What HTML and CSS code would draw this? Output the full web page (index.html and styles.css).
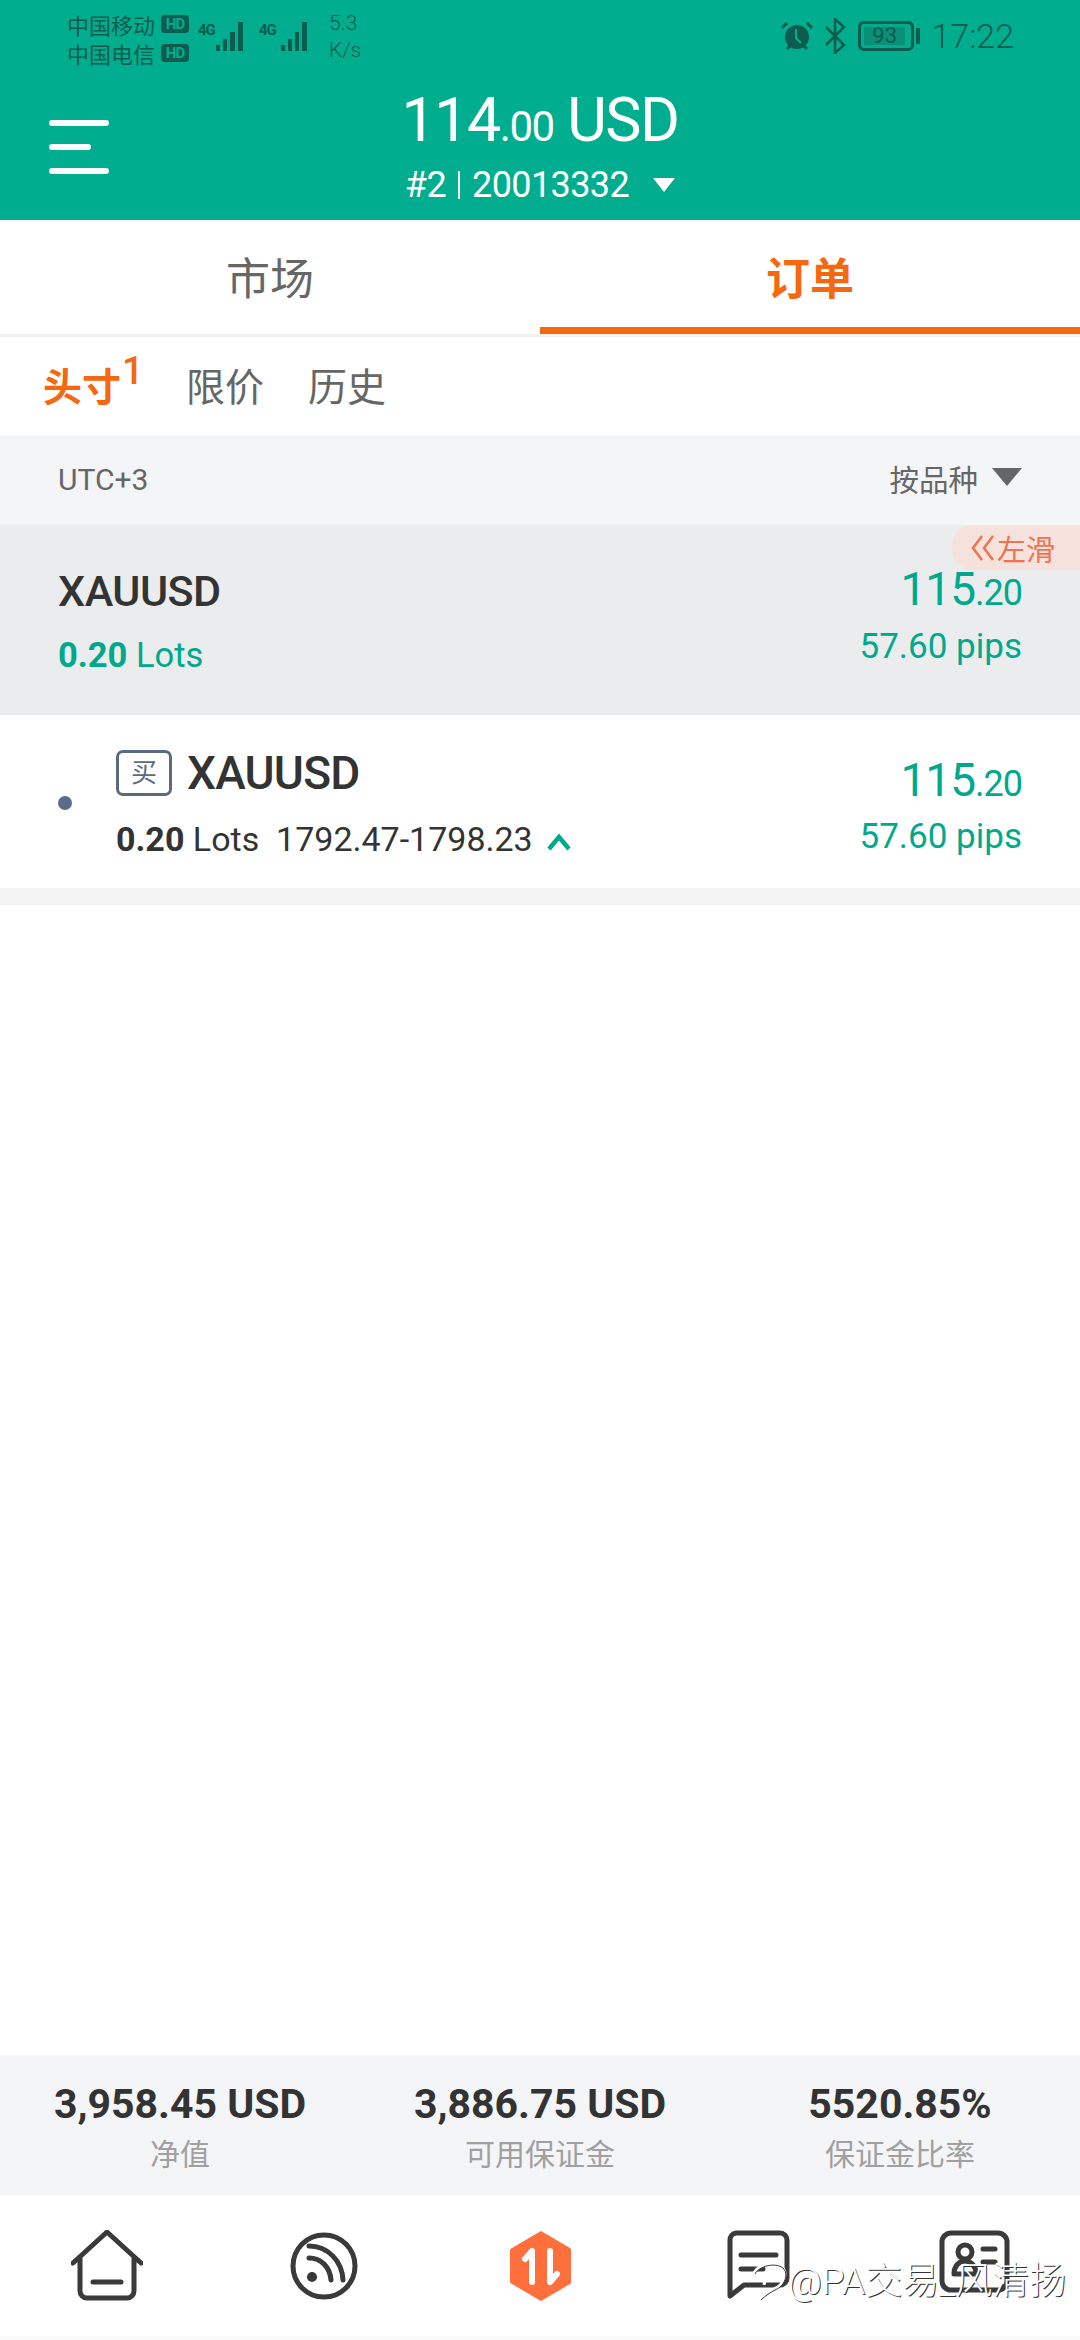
FILE: index.html
```html
<!DOCTYPE html>
<html lang="en">

<head>
  <meta charset="UTF-8">
  <meta name="viewport" content="width=device-width, initial-scale=1.0">
  <link rel="stylesheet" href="styles.css">
  <title>Orders</title>
</head>

<body>
  <div class="page">

    <header class="top">
      <div class="status">
        <div class="carriers">
          <div class="carrier">中国移动 <span class="hd">HD</span></div>
          <div class="carrier">中国电信 <span class="hd">HD</span></div>
        </div>
        <div class="signal">
          <span class="net">4G</span>
          <svg width="34" height="32" viewBox="0 0 34 32">
            <rect x="0" y="24" width="4" height="6" fill="#0c5c50" />
            <rect x="7" y="18" width="4" height="12" fill="#0c5c50" />
            <rect x="14" y="11" width="5" height="19" fill="#0c5c50" />
            <rect x="22" y="1" width="5" height="29" fill="#0c5c50" />
          </svg>
        </div>
        <div class="signal">
          <span class="net">4G</span>
          <svg width="34" height="32" viewBox="0 0 34 32">
            <rect x="4" y="24" width="4" height="6" fill="#0c5c50" />
            <rect x="11" y="18" width="4" height="12" fill="#0c5c50" />
            <rect x="18" y="11" width="4" height="19" fill="#0c5c50" />
            <rect x="25" y="1" width="5" height="29" fill="#0c5c50" />
          </svg>
        </div>
        <div class="speed">5.3<br>K/s</div>

        <div class="status-right">
          <svg width="36" height="32" viewBox="0 0 36 32">
            <circle cx="18" cy="17" r="12" fill="#0c5c50" />
            <path d="M17 9v9l5 5" fill="none" stroke="#00ae8f" stroke-width="2" />
            <path d="M3 8l5-5M33 8l-5-5M8 29l3-3M28 29l-3-3" stroke="#0c5c50" stroke-width="3" />
          </svg>
          <svg class="bt" width="22" height="36" viewBox="0 0 22 36">
            <path d="M2 9l18 18-9 8V1l9 8L2 27" fill="none" stroke="#0c5c50" stroke-width="2.5" />
          </svg>
          <div class="battery"><span class="level">93</span></div>
          <div class="nub"></div>
          <span class="clock">17:22</span>
        </div>
      </div>

      <div class="account">
        <div class="menu">
          <span class="bar"></span>
          <span class="bar short"></span>
          <span class="bar"></span>
        </div>
        <div class="balance">114<small>.00</small> USD</div>
        <div class="login">#2 <i class="sep"></i> 20013332 <i class="tri"></i></div>
      </div>
    </header>

    <nav class="tabs">
      <div class="tab">市场</div>
      <div class="tab active">订单</div>
    </nav>

    <div class="subtabs">
      <div class="subtab active">头寸<sup>1</sup></div>
      <div class="subtab">限价</div>
      <div class="subtab">历史</div>
    </div>

    <div class="filter">
      <span>UTC+3</span>
      <div class="sort">按品种 <i class="sort-tri"></i></div>
    </div>

    <section class="group">
      <div class="swipe">
        <svg width="24" height="26" viewBox="0 0 24 26">
          <path d="M11 1L2 13l9 12M22 1l-9 12 9 12" fill="none" stroke="#ef7350" stroke-width="2.5" />
        </svg>
        左滑
      </div>
      <div>
        <div class="symbol">XAUUSD</div>
        <div class="lots green"><b>0.20</b> Lots</div>
      </div>
      <div class="profit">
        <div class="amount">115<small>.20</small></div>
        <div class="pips">57.60 pips</div>
      </div>
    </section>

    <section class="order">
      <span class="dot"></span>
      <div class="order-main">
        <div class="order-title">
          <span class="side">买</span>
          <span class="symbol">XAUUSD</span>
        </div>
        <div class="lots"><b>0.20</b> Lots&nbsp; 1792.47-1798.23
          <svg class="caret" width="26" height="18" viewBox="0 0 26 18">
            <path d="M3 16L13 4l10 12" fill="none" stroke="#00a88c" stroke-width="4.5" />
          </svg>
        </div>
      </div>
      <div class="profit">
        <div class="amount">115<small>.20</small></div>
        <div class="pips">57.60 pips</div>
      </div>
    </section>

    <div class="gap"></div>
    <div class="empty"></div>

    <section class="stats">
      <div class="stat">
        <div class="stat-value">3,958.45 USD</div>
        <div class="stat-label">净值</div>
      </div>
      <div class="stat">
        <div class="stat-value">3,886.75 USD</div>
        <div class="stat-label">可用保证金</div>
      </div>
      <div class="stat">
        <div class="stat-value">5520.85%</div>
        <div class="stat-label">保证金比率</div>
      </div>
    </section>

    <footer class="bottom">
      <div class="nav-item">
        <svg width="72" height="72" viewBox="0 0 72 72">
          <path d="M2 33L36 2l34 31M9 28v33a7 7 0 0 0 7 7h40a7 7 0 0 0 7-7V28" fill="none" stroke="#3a3a3a" stroke-width="5" stroke-linecap="round" stroke-linejoin="round" />
          <path d="M22 52h28" stroke="#3a3a3a" stroke-width="5" stroke-linecap="round" />
        </svg>
      </div>
      <div class="nav-item">
        <svg width="72" height="72" viewBox="0 0 72 72">
          <circle cx="36" cy="36" r="31" fill="none" stroke="#3a3a3a" stroke-width="5" />
          <circle cx="24" cy="47" r="5" fill="#3a3a3a" />
          <path d="M21 28c12 0 21 9 22 22M21 16c19 0 33 15 34 34" fill="none" stroke="#3a3a3a" stroke-width="5" stroke-linecap="round" />
        </svg>
      </div>
      <div class="nav-item">
        <svg width="72" height="72" viewBox="0 0 72 72">
          <path d="M36 1l29 17a3 3 0 0 1 1 3v30a3 3 0 0 1-1 3L36 71 7 54a3 3 0 0 1-2-3V21a3 3 0 0 1 2-3z" fill="#ff6f3c" />
          <path d="M27 21v31M27 21l-7 8M45 52V21M45 52l7-8" fill="none" stroke="#fff" stroke-width="6" stroke-linecap="round" />
        </svg>
      </div>
      <div class="nav-item">
        <svg width="72" height="72" viewBox="0 0 72 72">
          <path d="M14 3h44a7 7 0 0 1 7 7v38a7 7 0 0 1-7 7H22L8 66V10a7 7 0 0 1 6-7z" fill="none" stroke="#3a3a3a" stroke-width="5" stroke-linejoin="round" />
          <path d="M19 25h35M19 39h22" stroke="#3a3a3a" stroke-width="5" stroke-linecap="round" />
        </svg>
      </div>
      <div class="nav-item">
        <svg width="72" height="72" viewBox="0 0 72 72">
          <rect x="3" y="3" width="65" height="57" rx="9" fill="none" stroke="#3a3a3a" stroke-width="5" />
          <circle cx="26" cy="22" r="7" fill="none" stroke="#3a3a3a" stroke-width="5" />
          <path d="M15 44c0-8 5-13 11-13s11 5 11 13zM44 19h12M44 32h12" fill="none" stroke="#3a3a3a" stroke-width="5" stroke-linejoin="round" stroke-linecap="round" />
        </svg>
      </div>
      <div class="mark">
        <svg width="36" height="46" viewBox="0 0 36 46">
          <path d="M2 18c4-8 20-12 28-6 6 6 2 18-8 22-4 2-10 6-14 10 0-4 2-8 4-10M20 4c-4 8-6 18-8 26" fill="none" stroke="#fff" stroke-width="3" />
          <path d="M3 19c4-8 20-12 28-6 6 6 2 18-8 22-4 2-10 6-14 10" fill="none" stroke="#333" stroke-width="1" />
        </svg>
        <span>@PA交易_风清扬</span>
      </div>
    </footer>

  </div>
</body>

</html>
```

FILE: styles.css
```css
* {
  box-sizing: border-box;
}

body {
  margin: 0;
  background-color: #ffffff;
  font-family: Roboto, "Noto Sans CJK SC", sans-serif;
}

.page {
  width: 1080px;
  height: 2340px;
  display: flex;
  flex-direction: column;
  overflow: hidden;
}

/* green header */
.top {
  height: 220px;
  background-color: #00ae8f;
  color: #ffffff;
}

.status {
  height: 72px;
  padding: 10px 66px 0 67px;
  display: flex;
  align-items: flex-start;
  color: #0c5c50;
}

.carriers {
  width: 131px;
}

.carrier {
  height: 28px;
  display: flex;
  align-items: center;
  gap: 6px;
  font-size: 22px;
  white-space: nowrap;
  margin-bottom: 1px;
}

.hd {
  width: 28px;
  height: 18px;
  background-color: #0c5c50;
  color: #00ae8f;
  border-radius: 4px;
  font-size: 15px;
  font-weight: 700;
  line-height: 18px;
  text-align: center;
  letter-spacing: -1px;
}

.signal {
  display: flex;
  margin: 11px 9px 0 0;
}

.net {
  width: 18px;
  font-size: 15px;
  font-weight: 700;
  line-height: 18px;
  letter-spacing: -1px;
}

.speed {
  margin-left: 9px;
  font-size: 21px;
  line-height: 27px;
  font-weight: 300;
}

.status-right {
  margin-left: auto;
  display: flex;
  align-items: center;
  height: 52px;
}

.bt {
  margin: 0 12px 0 9px;
}

.battery {
  width: 56px;
  height: 30px;
  border: 3px solid #0c5c50;
  border-radius: 6px;
  padding: 3px;
}

.level {
  display: block;
  width: 92%;
  height: 18px;
  background-color: #0a8f78;
  font-size: 22px;
  line-height: 18px;
  text-align: center;
}

.nub {
  width: 4px;
  height: 16px;
  margin: 0 11px 0 2px;
  background-color: #0c5c50;
}

.clock {
  font-size: 34px;
  font-weight: 300;
}

.account {
  position: relative;
  height: 148px;
  text-align: center;
}

.menu {
  position: absolute;
  left: 49px;
  top: 48px;
  width: 60px;
}

.bar {
  display: block;
  height: 6px;
  margin-bottom: 18px;
  background-color: #ffffff;
  border-radius: 3px;
}

.bar.short {
  width: 42px;
}

.balance {
  padding-top: 15px;
  font-size: 61px;
  line-height: 66px;
  letter-spacing: -1.5px;
}

.balance small {
  font-size: 42px;
}

.login {
  margin-top: 3px;
  display: flex;
  justify-content: center;
  align-items: center;
  gap: 12px;
  font-size: 36px;
  line-height: 44px;
  letter-spacing: -0.6px;
}

.sep {
  width: 2px;
  height: 28px;
  background-color: #ffffff;
}

.tri {
  width: 0;
  height: 0;
  margin-left: 12px;
  border-left: 11px solid transparent;
  border-right: 11px solid transparent;
  border-top: 14px solid #ffffff;
}

/* main tabs */
.tabs {
  height: 117px;
  display: flex;
  border-bottom: 3px solid #f1f1f1;
}

.tab {
  flex: 1;
  height: 114px;
  padding-top: 34px;
  text-align: center;
  font-size: 44px;
  line-height: 52px;
  color: #666666;
}

.tab.active {
  color: #f5680f;
  font-weight: 700;
  border-bottom: 7px solid #f5680f;
}

.subtabs {
  height: 98px;
  padding-left: 43px;
  display: flex;
  gap: 44px;
  align-items: flex-start;
}

.subtab {
  padding-top: 28px;
  font-size: 39px;
  line-height: 46px;
  color: #666666;
}

.subtab.active {
  color: #f5680f;
  font-weight: 700;
  width: 100px;
  margin-right: -1px;
  white-space: nowrap;
}

.subtab sup {
  font-size: 38px;
  font-weight: 500;
  line-height: 0;
  vertical-align: 17px;
  margin-left: 1px;
}

.filter {
  height: 90px;
  padding: 0 58px;
  display: flex;
  justify-content: space-between;
  align-items: center;
  background-color: #f4f5f7;
  color: #666666;
  font-size: 30px;
}

.filter span {
  margin-top: -2px;
}

.sort {
  display: flex;
  align-items: center;
  gap: 14px;
  margin-top: -4px;
  font-size: 29.5px;
}

.sort-tri {
  width: 0;
  height: 0;
  margin-bottom: 2px;
  border-left: 15px solid transparent;
  border-right: 15px solid transparent;
  border-top: 18px solid #666666;
}

/* position rows */
.group {
  position: relative;
  height: 190px;
  padding: 40px 58px 0;
  display: flex;
  justify-content: space-between;
  background-color: #ebecee;
}

.swipe {
  position: absolute;
  right: 0;
  top: 0;
  width: 128px;
  height: 45px;
  padding-left: 19px;
  display: flex;
  align-items: center;
  gap: 2px;
  background-color: #f5e2dc;
  border-radius: 20px 0 0 20px;
  color: #ef7350;
  font-size: 29px;
  white-space: nowrap;
}

.symbol {
  font-size: 43px;
  line-height: 52px;
  font-weight: 500;
  letter-spacing: -0.5px;
  color: #333333;
}

.order .symbol {
  font-size: 46px;
  letter-spacing: -0.8px;
}

.lots {
  font-size: 34.5px;
  line-height: 44px;
  color: #333333;
}

.lots b {
  font-weight: 700;
}

.group .lots {
  margin-top: 16px;
}

.order-main .lots {
  font-size: 34px;
}

.green {
  color: #00a88c;
}

.profit {
  text-align: right;
  color: #00a88c;
}

.group .profit {
  margin-top: -2px;
}

.amount {
  font-size: 46px;
  line-height: 52px;
  letter-spacing: -1px;
}

.amount small {
  font-size: 36px;
}

.pips {
  margin-top: 6px;
  font-size: 35px;
  line-height: 44px;
}

.order {
  height: 173px;
  padding: 32px 58px 0;
  display: flex;
  background-color: #ffffff;
}

.dot {
  width: 14px;
  height: 14px;
  margin: 49px 30px 0 0;
  border-radius: 50%;
  background-color: #5b6b8c;
}

.order-main {
  flex: 1;
  padding-left: 14px;
}

.order-title {
  display: flex;
  align-items: center;
  gap: 15px;
  height: 52px;
}

.side {
  width: 56px;
  height: 46px;
  border: 3px solid #5a6b7f;
  border-radius: 7px;
  color: #5a6b7f;
  font-size: 26px;
  line-height: 40px;
  text-align: center;
}

.order-main .lots {
  margin-top: 18px;
  white-space: nowrap;
}

.caret {
  margin-left: 5px;
}

.order .profit {
  padding-top: 7px;
}

.order .pips {
  margin-top: 5px;
}

.gap {
  height: 17px;
  background-color: #f3f3f3;
}

.empty {
  flex: 1;
}

/* account totals */
.stats {
  height: 140px;
  padding-top: 26px;
  display: flex;
  background-color: #f4f5f7;
}

.stat {
  flex: 1;
  text-align: center;
}

.stat-value {
  font-size: 41px;
  line-height: 46px;
  font-weight: 700;
  color: #333333;
}

.stat-label {
  margin-top: 8px;
  font-size: 30px;
  line-height: 40px;
  color: #a0a0a0;
}

/* bottom nav */
.bottom {
  position: relative;
  height: 145px;
  padding-top: 35px;
  display: flex;
  border-bottom: 4px solid #fafafa;
  padding-left: 71px;
  gap: 145px;
}

.nav-item {
  width: 72px;
  height: 72px;
}

.mark {
  position: absolute;
  left: 752px;
  top: 56px;
  display: flex;
  align-items: center;
  gap: 0;
  color: #ffffff;
  font-size: 37px;
  font-weight: 300;
  white-space: nowrap;
  text-shadow: 1px 1px 0 #333333;
}
```
